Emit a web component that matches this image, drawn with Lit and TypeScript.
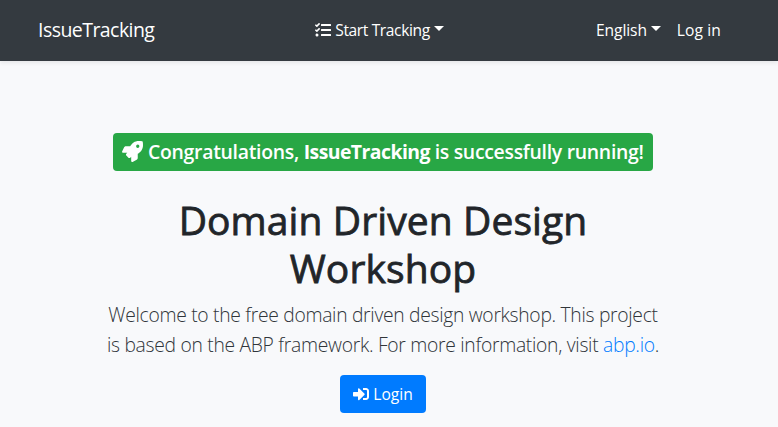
import { LitElement, html, css, svg } from "lit";
import { customElement } from "lit/decorators.js";

const icon = (name: string, d: string) =>
  html`<svg class="icon ${name}" viewBox="0 0 512 512" aria-hidden="true">${svg`<path fill="currentColor" d=${d}></path>`}</svg>`;

const TASKS =
  "M139.61 35.5a12 12 0 0 0-17 0L58.93 98.81l-22.7-22.12a12 12 0 0 0-17 0L3.53 92.41a12 12 0 0 0 0 17l47.59 47.4a12.78 12.78 0 0 0 17.61 0l15.59-15.62L156.52 69a12.09 12.09 0 0 0 .09-17zm0 159.19a12 12 0 0 0-17 0l-63.68 63.72-22.7-22.1a12 12 0 0 0-17 0L3.53 252a12 12 0 0 0 0 17L51 316.5a12.77 12.77 0 0 0 17.6 0l15.7-15.69 72.2-72.22a12 12 0 0 0 .09-16.9zM64 368c-26.49 0-48.59 21.5-48.59 48S37.53 464 64 464a48 48 0 0 0 0-96zm432 16H208a16 16 0 0 0-16 16v32a16 16 0 0 0 16 16h288a16 16 0 0 0 16-16v-32a16 16 0 0 0-16-16zm0-320H208a16 16 0 0 0-16 16v32a16 16 0 0 0 16 16h288a16 16 0 0 0 16-16V80a16 16 0 0 0-16-16zm0 160H208a16 16 0 0 0-16 16v32a16 16 0 0 0 16 16h288a16 16 0 0 0 16-16v-32a16 16 0 0 0-16-16z";
const ROCKET =
  "M505.12 19.094c-1.19-5.531-6.659-11-12.207-12.188C460.716 0 435.507 0 410.407 0 307.175 0 245.269 55.203 199.052 128H94.838c-16.348.016-35.556 11.875-42.887 26.484L2.516 253.297A28.4 28.4 0 0 0 0 264a24.009 24.009 0 0 0 24.006 24h103.81l-22.474 22.469c-11.365 11.361-12.996 32.258 0 45.25l50.904 50.906c11.156 11.188 32.156 13.156 45.277 0l22.475-22.469V488a24.009 24.009 0 0 0 24.006 24 28.559 28.559 0 0 0 10.707-2.516l98.728-49.39c14.629-7.297 26.508-26.5 26.508-42.86V312.797c72.598-46.313 128.035-108.406 128.035-211.094.091-25.203.091-50.406-6.864-82.609zM384.04 168a40 40 0 1 1 40.01-40 40.023 40.023 0 0 1-40.01 40z";
const SIGN_IN =
  "M416 448h-84c-6.6 0-12-5.4-12-12v-40c0-6.6 5.4-12 12-12h84c17.7 0 32-14.3 32-32V160c0-17.7-14.3-32-32-32h-84c-6.6 0-12-5.4-12-12V76c0-6.6 5.4-12 12-12h84c53 0 96 43 96 96v192c0 53-43 96-96 96zm-47-201L201 79c-15-15-41-4.5-41 17v96H24c-13.3 0-24 10.7-24 24v96c0 13.3 10.7 24 24 24h136v96c0 21.5 26 32 41 17l168-168c9.3-9.4 9.3-24.6 0-34z";

@customElement("app-root")
export class AppRoot extends LitElement {
  static styles = css`
    :host {
      display: block;
      height: 427px;
      overflow: hidden;
      background: #f8f9fb;
      color: #212529;
      font: 400 15.6px/24px "Open Sans", "Noto Sans", sans-serif;
    }
    * { box-sizing: border-box; }
    a { color: inherit; text-decoration: none; }
    .icon { display: block; flex: none; width: 16px; height: 16px; }
    .navbar {
      display: grid;
      grid-template-columns: 1fr auto 1fr;
      align-items: center;
      width: 100%;
      height: 61px;
      padding: 0 57px 2px 38px;
      background: #343a40;
      color: #fff;
      box-shadow: 0 2px 4px rgba(0, 0, 0, 0.075);
      white-space: nowrap;
    }
    .brand { font-size: 19.5px; line-height: 30px; letter-spacing: -0.55px; }
    .menu { display: flex; align-items: center; gap: 4px; letter-spacing: -0.4px; }
    .right { display: flex; justify-content: flex-end; gap: 16px; }
    .right .lang { display: flex; align-items: center; gap: 4px; letter-spacing: -0.1px; }
    .login { letter-spacing: 0.1px; }
    .caret {
      border-top: 5px solid;
      border-left: 5px solid transparent;
      border-right: 5px solid transparent;
      margin-bottom: 3px;
    }
    .hero {
      display: flex;
      flex-direction: column;
      align-items: center;
      width: 766px;
      padding-top: 72px;
      text-align: center;
    }
    .badge {
      display: flex;
      align-items: center;
      width: 540px;
      height: 38px;
      padding: 0 9px 2px;
      border-radius: 4px;
      background: #28a745;
      color: #fff;
      font-size: 19.4px;
      font-weight: 600;
      line-height: 28px;
      white-space: pre;
      letter-spacing: -0.28px;
    }
    .badge span { padding-top: 2px; }
    .badge strong { font-weight: 700; letter-spacing: -0.54px; }
    .rocket { width: 21px; height: 21px; margin-right: 5px; }
    .title {
      margin: 25px 0 8px;
      font-size: 39px;
      font-weight: 400;
      line-height: 48px;
      letter-spacing: 0.1px;
      -webkit-text-stroke: 0.8px currentColor;
    }
    .lead {
      margin: 0 0 15px;
      color: #30353a;
      font-size: 19.3px;
      font-weight: 300;
      line-height: 30px;
      letter-spacing: -0.3px;
      white-space: nowrap;
    }
    .second { letter-spacing: -0.29px; }
    .link { color: #007bff; }
    .button {
      display: flex;
      align-items: center;
      justify-content: center;
      gap: 4px;
      width: 86px;
      height: 38px;
      border-radius: 4px;
      background: #007bff;
      color: #fff;
    }
  `;

  render() {
    return html`
      <nav class="navbar">
        <a class="brand">IssueTracking</a>
        <a class="menu">${icon("tasks", TASKS)}<span>Start Tracking</span><i class="caret"></i></a>
        <div class="right">
          <a class="lang"><span>English</span><i class="caret"></i></a>
          <a class="login">Log in</a>
        </div>
      </nav>
      <main class="hero">
        <div class="badge">${icon("rocket", ROCKET)}<span>Congratulations, <strong>IssueTracking</strong> is successfully running!</span></div>
        <h1 class="title">Domain Driven Design<br />Workshop</h1>
        <p class="lead">
          Welcome to the free domain driven design workshop. This project<br />
          <span class="second">is based on the ABP framework. For more information, visit <a class="link">abp.io</a>.</span>
        </p>
        <a class="button">${icon("sign-in", SIGN_IN)}<span>Login</span></a>
      </main>
    `;
  }
}
